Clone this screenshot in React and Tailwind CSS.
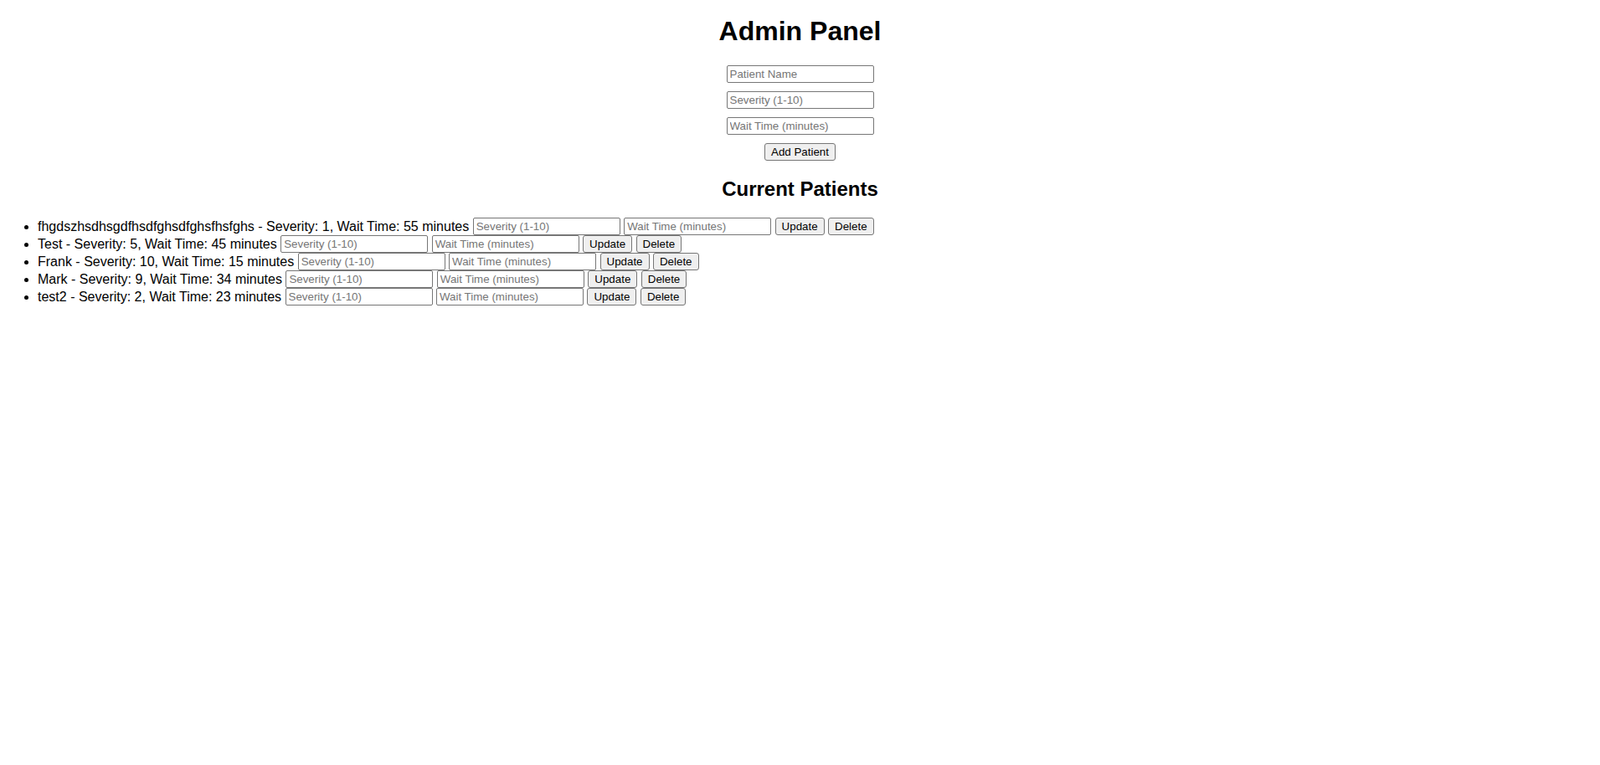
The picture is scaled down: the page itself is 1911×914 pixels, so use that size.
import { useState } from "react";

const initialPatients = [
  { id: 1, name: "fhgdszhsdhsgdfhsdfghsdfghsfhsfghs", severity: 1, waitTime: 55 },
  { id: 2, name: "Test", severity: 5, waitTime: 45 },
  { id: 3, name: "Frank", severity: 10, waitTime: 15 },
  { id: 4, name: "Mark", severity: 9, waitTime: 34 },
  { id: 5, name: "test2", severity: 2, waitTime: 23 },
];

const inputClass =
  "w-[176px] h-[21px] px-[3px] border border-[#767676] rounded-[2px] bg-white text-[13.33px] text-black placeholder:text-[#757575] align-top outline-none";
const buttonClass =
  "h-[21px] px-[7px] border border-[#767676] rounded-[3px] bg-[#efefef] text-[13.33px] text-black align-top leading-[19px]";

const PatientRow = ({ patient, onUpdate, onDelete }) => {
  const [severity, setSeverity] = useState("");
  const [waitTime, setWaitTime] = useState("");

  return (
    <li className="leading-[21px]">
      {patient.name} - Severity: {patient.severity}, Wait Time: {patient.waitTime} minutes{" "}
      <input
        className={inputClass}
        placeholder="Severity (1-10)"
        value={severity}
        onChange={(e) => setSeverity(e.target.value)}
      />{" "}
      <input
        className={inputClass}
        placeholder="Wait Time (minutes)"
        value={waitTime}
        onChange={(e) => setWaitTime(e.target.value)}
      />{" "}
      <button className={buttonClass} onClick={() => onUpdate(patient.id, severity, waitTime)}>
        Update
      </button>{" "}
      <button className={buttonClass} onClick={() => onDelete(patient.id)}>
        Delete
      </button>
    </li>
  );
};

export default function App() {
  const [patients, setPatients] = useState(initialPatients);
  const [name, setName] = useState("");
  const [severity, setSeverity] = useState("");
  const [waitTime, setWaitTime] = useState("");

  const addPatient = () => {
    if (!name) return;
    setPatients([
      ...patients,
      { id: Date.now(), name, severity: Number(severity) || 0, waitTime: Number(waitTime) || 0 },
    ]);
    setName("");
    setSeverity("");
    setWaitTime("");
  };

  const updatePatient = (id, s, w) => {
    setPatients(
      patients.map((p) =>
        p.id === id
          ? { ...p, severity: s ? Number(s) : p.severity, waitTime: w ? Number(w) : p.waitTime }
          : p
      )
    );
  };

  const deletePatient = (id) => {
    setPatients(patients.filter((p) => p.id !== id));
  };

  return (
    <div className="min-h-screen bg-white text-black text-[16px] font-['Liberation_Sans',Arial,sans-serif] pt-[19px]">
      {/* Header + form */}
      <h1 className="text-center text-[32px] leading-[37px] font-bold">Admin Panel</h1>

      <div className="flex flex-col items-center gap-[10px] mt-[22px]">
        <input
          className={inputClass}
          placeholder="Patient Name"
          value={name}
          onChange={(e) => setName(e.target.value)}
        />
        <input
          className={inputClass}
          placeholder="Severity (1-10)"
          value={severity}
          onChange={(e) => setSeverity(e.target.value)}
        />
        <input
          className={inputClass}
          placeholder="Wait Time (minutes)"
          value={waitTime}
          onChange={(e) => setWaitTime(e.target.value)}
        />
        <button className={buttonClass} onClick={addPatient}>
          Add Patient
        </button>
      </div>

      {/* Patient list */}
      <h2 className="text-center text-[24px] leading-[28px] font-bold mt-[20px]">Current Patients</h2>

      <ul className="list-disc pl-[45px] mt-[20px]">
        {patients.map((patient) => (
          <PatientRow
            key={patient.id}
            patient={patient}
            onUpdate={updatePatient}
            onDelete={deletePatient}
          />
        ))}
      </ul>
    </div>
  );
}
